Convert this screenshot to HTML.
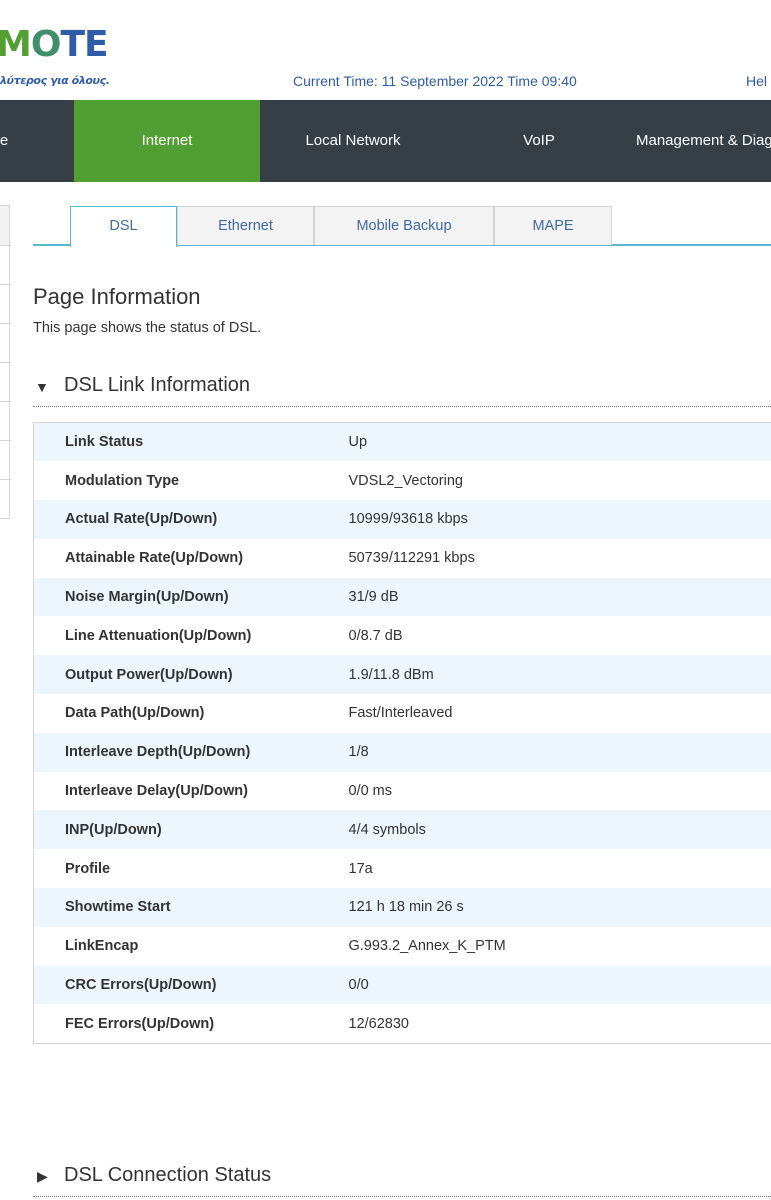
<!DOCTYPE html>
<html><head><meta charset="utf-8"><style>
*{margin:0;padding:0;box-sizing:border-box}
body{width:771px;height:1200px;overflow:hidden;background:#fff;font-family:"Liberation Sans","DejaVu Sans",sans-serif;position:relative;color:#333}
.abs{position:absolute;white-space:nowrap}
.logo{left:-4px;top:24px;font-size:36px;font-weight:bold;letter-spacing:-1px;color:#2f5ca8;font-family:"DejaVu Sans",sans-serif}
.logo .g{color:#52a033}
.tag{left:0;top:74px;font-size:11px;font-style:italic;font-weight:bold;color:#2f5ca8;font-family:"DejaVu Sans",sans-serif;letter-spacing:-0.4px}
.time{left:293px;top:73px;font-size:14px;color:#2f5ca8}
.help{left:746px;top:73px;font-size:14px;color:#2f5ca8}
.nav{left:0;top:100px;width:771px;height:82px;background:#363f46}
.nav div{position:absolute;top:0;height:82px;line-height:82px;color:#fff;font-size:15px;text-align:center}
.side{left:-2px;top:205px;width:12px;height:314px;border:1px solid #d4d4d4}
.side i{position:absolute;left:0;width:12px;border-top:1px solid #d4d4d4}
.tabs{left:33px;top:244px;width:738px;border-top:2px solid #5ab8cf}
.tab{position:absolute;top:206px;height:39px;line-height:38px;text-align:center;font-size:14.5px;color:#3f6aa0;background:#f3f3f3;border:1px solid #d3d3d3;border-bottom:none}
.tab.a{background:#fff;border:1px solid #5ab8cf;border-bottom:none;height:41px;color:#3f6aa0}
table{position:absolute;left:33px;top:422px;width:760px;border:1px solid #d4d4d4;border-collapse:collapse;font-size:14.5px}
td{height:38.8px;padding:0}
td.k{width:315px;padding-left:31px;font-weight:bold;color:#333}
tr:nth-child(odd){background:#eef6fd}
</style></head><body>
<div class="abs logo"><span class="g">M</span><span style="color:#3f8f6a">O</span>TE</div>
<div class="abs tag">λύτερος για όλους.</div>
<div class="abs time">Current Time: 11 September 2022 Time 09:40</div>
<div class="abs help">Hel</div>
<div class="abs nav">
<div style="left:-6px;width:20px">e</div>
<div style="left:74px;width:186px;background:#519e33">Internet</div>
<div style="left:280px;width:146px">Local Network</div>
<div style="left:480px;width:118px">VoIP</div>
<div style="left:636px;width:160px;text-align:left">Management &amp; Diag</div>
</div>
<div class="abs side" style="background:linear-gradient(#f2f2f2 0,#f2f2f2 39px,#fff 39px)">
<i style="top:39px"></i><i style="top:78px"></i><i style="top:117px"></i><i style="top:156px"></i><i style="top:195px"></i><i style="top:234px"></i><i style="top:273px"></i>
</div>
<div class="abs tabs"></div>
<div class="tab a" style="left:70px;width:107px">DSL</div>
<div class="tab" style="left:177px;width:137px">Ethernet</div>
<div class="tab" style="left:314px;width:180px">Mobile Backup</div>
<div class="tab" style="left:494px;width:118px">MAPE</div>
<div class="abs" style="left:33px;top:284px;font-size:22px;color:#333">Page Information</div>
<div class="abs" style="left:33px;top:320px;font-size:14.5px;color:#333">This page shows the status of DSL.</div>
<div class="abs" style="left:35px;top:379px;font-size:14px;color:#333">▼</div>
<div class="abs" style="left:64px;top:374px;font-size:20px;color:#333">DSL Link Information</div>
<div class="abs" style="left:33px;top:406px;width:738px;border-top:1px dotted #777"></div>
<table>
<tr><td class="k">Link Status</td><td>Up</td></tr>
<tr><td class="k">Modulation Type</td><td>VDSL2_Vectoring</td></tr>
<tr><td class="k">Actual Rate(Up/Down)</td><td>10999/93618 kbps</td></tr>
<tr><td class="k">Attainable Rate(Up/Down)</td><td>50739/112291 kbps</td></tr>
<tr><td class="k">Noise Margin(Up/Down)</td><td>31/9 dB</td></tr>
<tr><td class="k">Line Attenuation(Up/Down)</td><td>0/8.7 dB</td></tr>
<tr><td class="k">Output Power(Up/Down)</td><td>1.9/11.8 dBm</td></tr>
<tr><td class="k">Data Path(Up/Down)</td><td>Fast/Interleaved</td></tr>
<tr><td class="k">Interleave Depth(Up/Down)</td><td>1/8</td></tr>
<tr><td class="k">Interleave Delay(Up/Down)</td><td>0/0 ms</td></tr>
<tr><td class="k">INP(Up/Down)</td><td>4/4 symbols</td></tr>
<tr><td class="k">Profile</td><td>17a</td></tr>
<tr><td class="k">Showtime Start</td><td>121 h 18 min 26 s</td></tr>
<tr><td class="k">LinkEncap</td><td>G.993.2_Annex_K_PTM</td></tr>
<tr><td class="k">CRC Errors(Up/Down)</td><td>0/0</td></tr>
<tr><td class="k">FEC Errors(Up/Down)</td><td>12/62830</td></tr>
</table>
<div class="abs" style="left:37px;top:1168px;font-size:14px;color:#333">▶</div>
<div class="abs" style="left:64px;top:1164px;font-size:20px;color:#333">DSL Connection Status</div>
<div class="abs" style="left:33px;top:1196px;width:738px;border-top:1px dotted #777"></div>
</body></html>
